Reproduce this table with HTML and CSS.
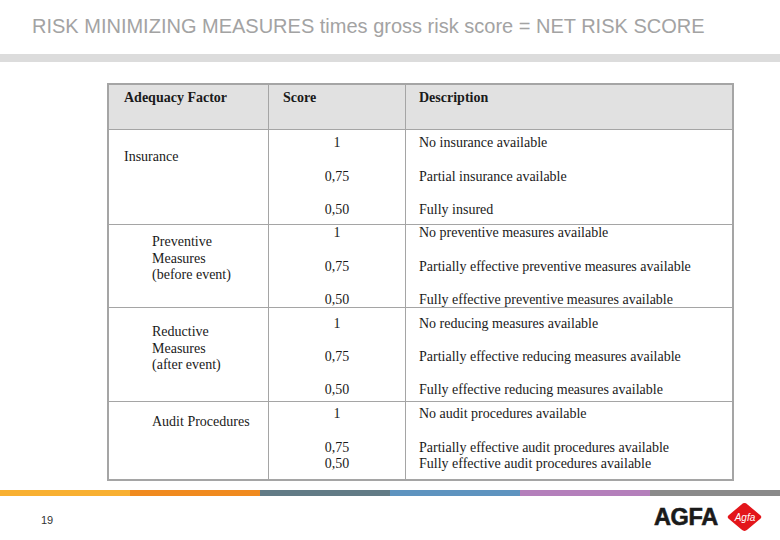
FILE: index.html
```html
<!DOCTYPE html>
<html>
<head>
<meta charset="utf-8">
<link rel="stylesheet" href="styles.css">
</head>
<body>
<div class="slide">
  <h1 class="title">RISK MINIMIZING MEASURES times gross risk score = NET RISK SCORE</h1>
  <div class="band"></div>

  <div class="table">
    <div class="cell head c1">Adequacy Factor</div>
    <div class="cell head c2">Score</div>
    <div class="cell head c3">Description</div>

    <div class="cell c1 r1"><div class="factor f-ins">Insurance</div></div>
    <div class="cell c2 r1"><div class="lines g1 p1"><div>1</div><div>0,75</div><div>0,50</div></div></div>
    <div class="cell c3 r1"><div class="lines g1 p1"><div>No insurance available</div><div>Partial insurance available</div><div>Fully insured</div></div></div>

    <div class="cell c1 r2"><div class="factor indent f-prev">Preventive<br>Measures<br>(before event)</div></div>
    <div class="cell c2 r2"><div class="lines g2 p2"><div>1</div><div>0,75</div><div>0,50</div></div></div>
    <div class="cell c3 r2"><div class="lines g2 p2"><div>No preventive measures available</div><div>Partially effective preventive measures available</div><div>Fully effective preventive measures available</div></div></div>

    <div class="cell c1 r3"><div class="factor indent f-red">Reductive<br>Measures<br>(after event)</div></div>
    <div class="cell c2 r3"><div class="lines g3 p3"><div>1</div><div>0,75</div><div>0,50</div></div></div>
    <div class="cell c3 r3"><div class="lines g3 p3"><div>No reducing measures available</div><div>Partially effective reducing measures available</div><div>Fully effective reducing measures available</div></div></div>

    <div class="cell c1 r4 last"><div class="factor indent f-aud">Audit Procedures</div></div>
    <div class="cell c2 r4 last"><div class="lines g4 p4"><div>1</div><div>0,75<br>0,50</div></div></div>
    <div class="cell c3 r4 last"><div class="lines g4 p4"><div>No audit procedures available</div><div>Partially effective audit procedures available<br>Fully effective audit procedures available</div></div></div>
  </div>

  <div class="stripe">
    <span class="s1"></span><span class="s2"></span><span class="s3"></span><span class="s4"></span><span class="s5"></span><span class="s6"></span>
  </div>

  <div class="footer">
    <span class="page">19</span>
    <div class="logo">
      <span class="wordmark">AGFA</span>
      <svg class="diamond" width="37" height="30" viewBox="0 0 37 30">
        <path d="M18.5 1 Q20 1 21.5 2.4 L34.6 13.6 Q36 15 34.6 16.4 L21.5 27.6 Q20 29 18.5 29 Q17 29 15.5 27.6 L2.4 16.4 Q1 15 2.4 13.6 L15.5 2.4 Q17 1 18.5 1 Z" fill="#e3161b"/>
        <text x="19" y="18.5" text-anchor="middle" class="dtext">Agfa</text>
      </svg>
    </div>
  </div>
</div>
</body>
</html>
```

FILE: styles.css
```css
html, body {
  margin: 0;
  padding: 0;
  background: #ffffff;
}

.slide {
  width: 780px;
  height: 540px;
  overflow: hidden;
  font-family: "Liberation Sans", Arial, sans-serif;
}

.title {
  margin: 0;
  padding: 14px 0 0 32px;
  font-size: 20px;
  line-height: 24px;
  font-weight: normal;
  color: #a3a3a3;
  letter-spacing: 0;
  white-space: nowrap;
}

.band {
  margin-top: 16px;
  height: 8px;
  background: #dcdcdc;
}

.table {
  margin: 21px 0 0 107px;
  width: 627px;
  box-sizing: border-box;
  border: 2px solid #a5a5a5;
  display: grid;
  grid-template-columns: 160px 137px 326px;
  grid-template-rows: 45px 95px 83px 94px 77px;
  font-family: "Liberation Serif", "Times New Roman", serif;
  font-size: 14px;
  line-height: 16px;
  color: #1a1a1a;
}

.cell {
  box-sizing: border-box;
  border-bottom: 1px solid #a5a5a5;
  border-right: 1px solid #a5a5a5;
}

.cell.c3 { border-right: none; }
.cell.last { border-bottom: none; }

.head {
  background: #e1e1e1;
  font-weight: bold;
  padding-top: 5px;
}

.head.c1 { padding-left: 15px; }
.head.c2 { padding-left: 14px; }
.head.c3 { padding-left: 13px; }

.c2 .lines { text-align: center; }
.c3 .lines { padding-left: 13px; }

.lines {
  display: flex;
  flex-direction: column;
  white-space: nowrap;
}

.g1 { gap: 17.5px; }
.g2 { gap: 17.5px; }
.g3 { gap: 17px; }
.g4 { gap: 18px; }

.p1 { padding-top: 5px; }
.p2 { padding-top: 0; }
.p3 { padding-top: 8px; }
.p4 { padding-top: 4px; }

.factor {
  padding-left: 15px;
  line-height: 16.5px;
}

.factor.indent { padding-left: 43px; }

.f-ins { padding-top: 19px; }
.f-prev { padding-top: 9px; }
.f-red { padding-top: 16px; }
.f-aud { padding-top: 12px; }

.stripe {
  margin-top: 9px;
  height: 6px;
  display: flex;
}

.stripe span { flex: 1; }
.s1 { background: #f8b032; }
.s2 { background: #f08a1f; }
.s3 { background: #627b86; }
.s4 { background: #5e93bf; }
.s5 { background: #b47fbb; }
.s6 { background: #8a8a8a; }

.footer {
  display: flex;
  justify-content: space-between;
  align-items: flex-start;
  padding: 6px 17px 0 41px;
}

.page {
  margin-top: 11px;
  font-size: 11px;
  line-height: 14px;
  color: #333333;
}

.logo {
  display: flex;
  align-items: center;
  gap: 8px;
}

.wordmark {
  font-family: "Liberation Sans", Arial, sans-serif;
  font-weight: bold;
  font-size: 23.5px;
  line-height: 30px;
  color: #1a1a1a;
  letter-spacing: -0.3px;
  -webkit-text-stroke: 0.6px #1a1a1a;
}

.diamond { display: block; }

.dtext {
  font-family: "Liberation Sans", Arial, sans-serif;
  font-style: italic;
  font-size: 10px;
  fill: #ffffff;
}
```
